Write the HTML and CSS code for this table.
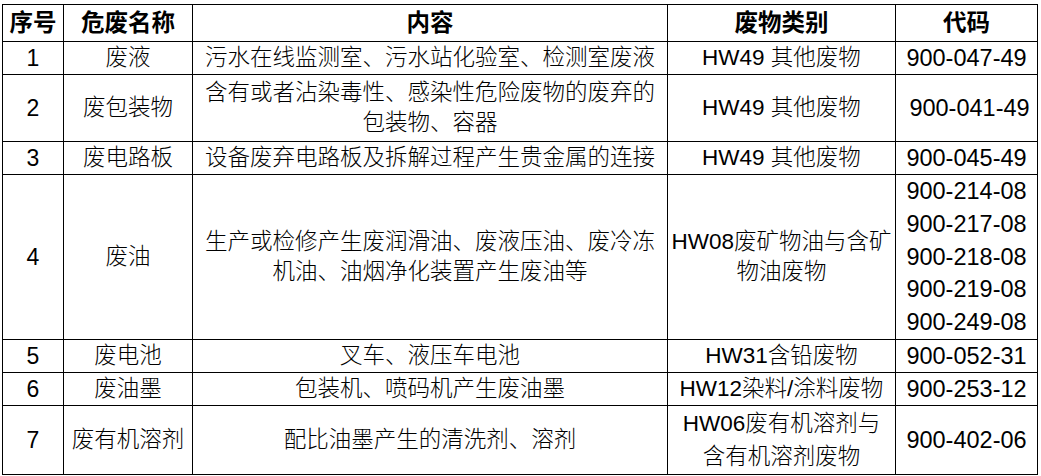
FILE: index.html
```html
<!DOCTYPE html>
<html lang="zh-CN">
<head>
<meta charset="utf-8">
<title>危废清单</title>
<link rel="stylesheet" href="styles.css">
</head>
<body>
<table class="waste">
  <colgroup>
    <col class="c-no">
    <col class="c-name">
    <col class="c-content">
    <col class="c-cat">
    <col class="c-code">
  </colgroup>
  <thead>
    <tr class="r-head">
      <th>序号</th>
      <th>危废名称</th>
      <th>内容</th>
      <th>废物类别</th>
      <th>代码</th>
    </tr>
  </thead>
  <tbody>
    <tr class="r-1">
      <td class="num">1</td>
      <td>废液</td>
      <td>污水在线监测室、污水站化验室、检测室废液</td>
      <td>HW49 其他废物</td>
      <td class="code">900-047-49</td>
    </tr>
    <tr class="r-2">
      <td class="num">2</td>
      <td>废包装物</td>
      <td class="two">含有或者沾染毒性、感染性危险废物的废弃的<br>包装物、容器</td>
      <td>HW49 其他废物</td>
      <td class="code shift">900-041-49</td>
    </tr>
    <tr class="r-1">
      <td class="num">3</td>
      <td>废电路板</td>
      <td>设备废弃电路板及拆解过程产生贵金属的连接</td>
      <td>HW49 其他废物</td>
      <td class="code">900-045-49</td>
    </tr>
    <tr class="r-4">
      <td class="num">4</td>
      <td>废油</td>
      <td class="two">生产或检修产生废润滑油、废液压油、废冷冻<br>机油、油烟净化装置产生废油等</td>
      <td class="two">HW08废矿物油与含矿<br>物油废物</td>
      <td class="code multi">900-214-08<br>900-217-08<br>900-218-08<br>900-219-08<br>900-249-08</td>
    </tr>
    <tr class="r-1">
      <td class="num">5</td>
      <td>废电池</td>
      <td>叉车、液压车电池</td>
      <td>HW31含铅废物</td>
      <td class="code">900-052-31</td>
    </tr>
    <tr class="r-1">
      <td class="num">6</td>
      <td>废油墨</td>
      <td>包装机、喷码机产生废油墨</td>
      <td>HW12染料/涂料废物</td>
      <td class="code">900-253-12</td>
    </tr>
    <tr class="r-7">
      <td class="num">7</td>
      <td>废有机溶剂</td>
      <td>配比油墨产生的清洗剂、溶剂</td>
      <td class="two tall">HW06废有机溶剂与<br>含有机溶剂废物</td>
      <td class="code">900-402-06</td>
    </tr>
  </tbody>
</table>
</body>
</html>
```

FILE: styles.css
```css
html, body {
  margin: 0;
  padding: 0;
  background: #ffffff;
}

body {
  padding: 4px 0 0 2px;
  font-family: "Liberation Sans", "Noto Sans CJK SC", sans-serif;
  color: #000;
}

.waste {
  border-collapse: collapse;
  table-layout: fixed;
  width: 1035px;
  font-size: 22.5px;
}

.c-no { width: 61px; }
.c-name { width: 129px; }
.c-content { width: 475px; }
.c-cat { width: 228px; }
.c-code { width: 142px; }

.waste th,
.waste td {
  border: 1px solid #000;
  padding: 0;
  text-align: center;
  vertical-align: middle;
  white-space: nowrap;
  line-height: 30px;
}

.waste td {
  font-weight: 300;
}

.waste th {
  font-weight: bold;
  font-size: 23.5px;
}

.r-head { height: 37px; }
.r-1 { height: 33px; }
.r-2 { height: 67px; }
.r-4 { height: 164px; }
.r-7 { height: 69px; }

.num {
  font-size: 23px;
}

.code {
  font-size: 23.5px;
}

.code.shift {
  padding-left: 6px;
}

.code.multi {
  line-height: 32.8px;
}

.two.tall {
  line-height: 33px;
}
```
